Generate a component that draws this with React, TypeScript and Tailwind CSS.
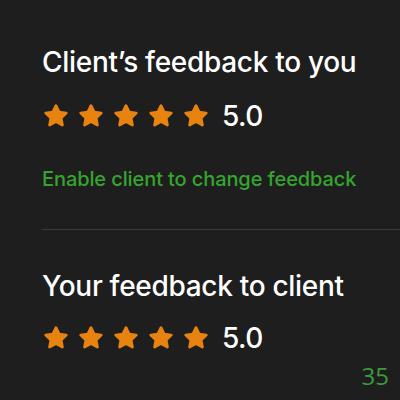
const Star = () => (
  <svg viewBox="0 0 24 24" className="h-[28px] w-[28px]">
    <path
      d="M12 3.2l2.7 5.55 6.1.75-4.45 4.2 1.12 6.05L12 16.8l-5.47 2.95 1.12-6.05L3.2 9.5l6.1-.75z"
      fill="#e8830f"
      stroke="#e8830f"
      strokeWidth="2.4"
      strokeLinejoin="round"
    />
  </svg>
);

const Rating = ({ value }: { value: string }) => (
  <div className="flex items-center">
    <div className="flex gap-[7px]">
      {[0, 1, 2, 3, 4].map((i) => (
        <Star key={i} />
      ))}
    </div>
    <span className="ml-[12px] text-[28px] font-medium leading-none tracking-[-0.5px] text-white">
      {value}
    </span>
  </div>
);

export default function App() {
  return (
    <div
      className="relative h-[400px] w-[400px] overflow-hidden bg-[#1e1e1e] pl-[42px] pt-[48px]"
      style={{ fontFamily: 'Inter, "Liberation Sans", sans-serif' }}
    >
      <h2 className="text-[28px] font-medium leading-none tracking-[-0.3px] text-white">
        Client’s feedback to you
      </h2>
      <div className="mt-[26px]">
        <Rating value="5.0" />
      </div>
      <p className="mt-[39px] text-[20px] font-medium leading-none tracking-[-0.1px] text-[#35a52f]">
        Enable client to change feedback
      </p>
      <div className="mt-[40px] h-px bg-[#3a3a3a]" />
      <h2 className="mt-[42px] text-[28px] font-medium leading-none tracking-[-0.3px] text-white">
        Your feedback to client
      </h2>
      <div className="mt-[24px]">
        <Rating value="5.0" />
      </div>
      <span
        className="absolute bottom-[12px] right-[11px] text-[24px] leading-none text-[#3c9a3c]"
        style={{ fontFamily: '"Open Sans", sans-serif' }}
      >
        35
      </span>
    </div>
  );
}
